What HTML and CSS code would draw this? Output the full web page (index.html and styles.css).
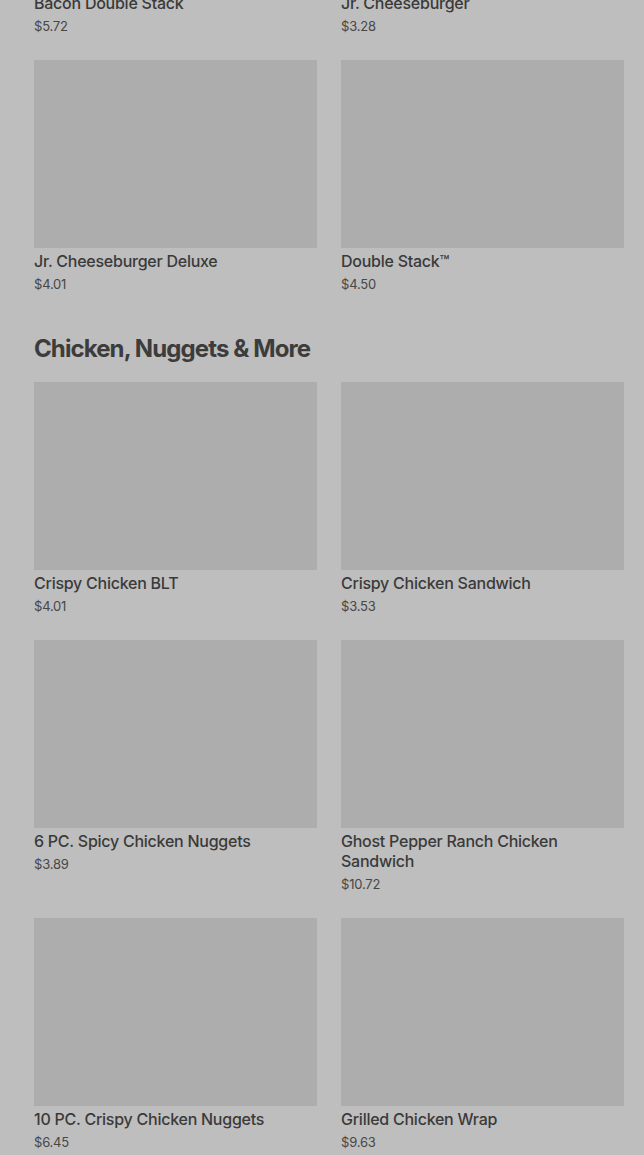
FILE: index.html
```html
<!DOCTYPE html>
<html lang="en">
<head>
<meta charset="utf-8">
<title>Menu</title>
<link rel="stylesheet" href="styles.css">
</head>
<body>
<main class="menu">
  <section class="grid first">
    <article class="item"><div class="thumb"></div><h3 class="name">Bacon Double Stack</h3><p class="price">$5.72</p></article>
    <article class="item"><div class="thumb"></div><h3 class="name">Jr. Cheeseburger</h3><p class="price">$3.28</p></article>
    <article class="item"><div class="thumb"></div><h3 class="name">Jr. Cheeseburger Deluxe</h3><p class="price">$4.01</p></article>
    <article class="item"><div class="thumb"></div><h3 class="name">Double Stack™</h3><p class="price">$4.50</p></article>
  </section>
  <h2 class="section-title">Chicken, Nuggets &amp; More</h2>
  <section class="grid">
    <article class="item"><div class="thumb"></div><h3 class="name">Crispy Chicken BLT</h3><p class="price">$4.01</p></article>
    <article class="item"><div class="thumb"></div><h3 class="name">Crispy Chicken Sandwich</h3><p class="price">$3.53</p></article>
    <article class="item"><div class="thumb"></div><h3 class="name">6 PC. Spicy Chicken Nuggets</h3><p class="price">$3.89</p></article>
    <article class="item"><div class="thumb"></div><h3 class="name">Ghost Pepper Ranch Chicken Sandwich</h3><p class="price">$10.72</p></article>
    <article class="item"><div class="thumb"></div><h3 class="name">10 PC. Crispy Chicken Nuggets</h3><p class="price">$6.45</p></article>
    <article class="item"><div class="thumb"></div><h3 class="name">Grilled Chicken Wrap</h3><p class="price">$9.63</p></article>
  </section>
</main>
</body>
</html>
```

FILE: styles.css
```css
html, body {
  margin: 0;
  padding: 0;
  background: #bebebe;
}
body {
  font-family: Inter, "Liberation Sans", sans-serif;
  color: #3b3b3b;
  overflow: hidden;
}
.menu {
  padding: 0 20px 0 34px;
  margin-top: -198px;
}
.grid {
  display: grid;
  grid-template-columns: 1fr 1fr;
  column-gap: 24px;
  row-gap: 24px;
}
.item {
  margin: 0;
}
.thumb {
  height: 188px;
  background: #adadad;
}
.name {
  margin: 3px 0 0;
  font-size: 16px;
  line-height: 20px;
  font-weight: 500;
  letter-spacing: -0.25px;
  color: #3a3a3a;
}
.price {
  margin: 3px 0 0;
  font-size: 13px;
  line-height: 20px;
  letter-spacing: -0.2px;
  color: #474747;
}
.section-title {
  margin: 39px 0 17px;
  font-size: 24px;
  line-height: 32px;
  font-weight: 700;
  letter-spacing: -0.9px;
  color: #3c3c3c;
}
```
